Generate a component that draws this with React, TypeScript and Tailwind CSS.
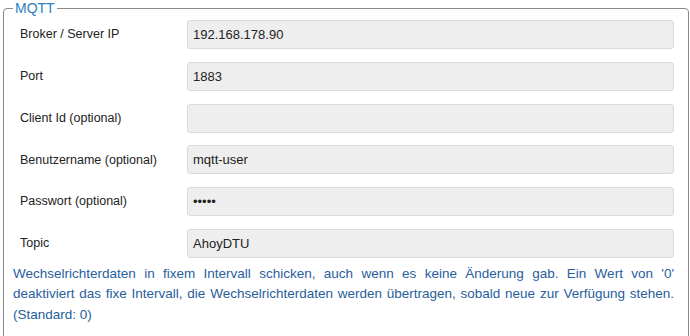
import React from "react";

const rows: { label: string; value: string; type?: string }[] = [
  { label: "Broker / Server IP", value: "192.168.178.90" },
  { label: "Port", value: "1883" },
  { label: "Client Id (optional)", value: "" },
  { label: "Benutzername (optional)", value: "mqtt-user" },
  { label: "Passwort (optional)", value: "•••••", type: "pw" },
  { label: "Topic", value: "AhoyDTU" },
];

export default function App() {
  return (
    <div className="w-[690px] h-[336px] overflow-hidden bg-white font-['Liberation_Sans',Arial,sans-serif]">
      <fieldset className="ml-[3px] mr-[1px] border border-[#8a8a8a] rounded-[4px] pl-[9px] pr-[14px] pb-[20px]">
        <legend className="px-[2px] text-[14px] leading-[16px] text-[#2a7fc2]">MQTT</legend>
        <div className="mt-[4px] flex flex-col gap-[12.8px]">
          {rows.map((r) => (
            <div key={r.label} className="flex items-center h-[29px]">
              <div className="w-[174px] pl-[7px] text-[12.5px] text-[#222]">{r.label}</div>
              <div className="flex-1 h-[29px] bg-[#eeeeee] border border-[#dadada] rounded-[3px] flex items-center px-[5px] text-[13px] text-[#222]">
                {r.type === "pw" ? (
                  <span className="text-[13px]">{r.value}</span>
                ) : (
                  r.value
                )}
              </div>
            </div>
          ))}
        </div>
        <p className="mt-[6px] text-[13.5px] leading-[20.5px] text-[#285e9c] text-justify">
          Wechselrichterdaten in fixem Intervall schicken, auch wenn es keine Änderung gab. Ein Wert von '0' deaktiviert das fixe Intervall, die Wechselrichterdaten werden übertragen, sobald neue zur Verfügung stehen. (Standard: 0)
        </p>
      </fieldset>
    </div>
  );
}
